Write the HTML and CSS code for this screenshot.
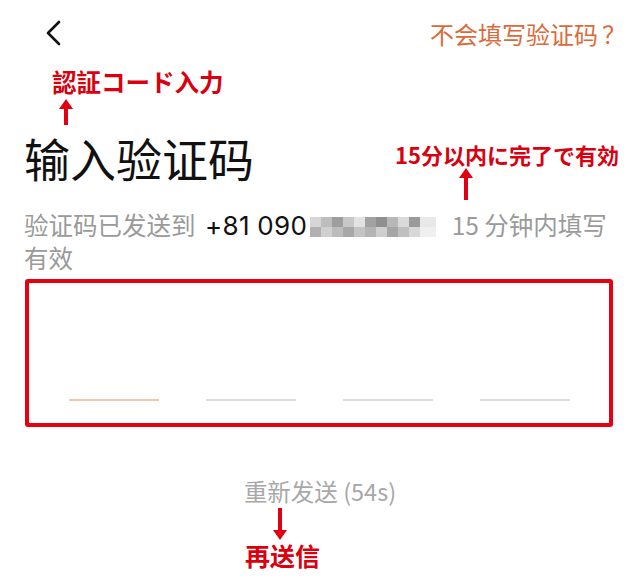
FILE: index.html
```html
<!DOCTYPE html>
<html lang="zh-CN">
<head>
    <meta charset="UTF-8">
    <meta name="viewport" content="width=device-width, initial-scale=1.0">
    <title>输入验证码</title>
    <link rel="stylesheet" href="styles.css">
</head>
<body>
    <div class="screen">
        <div class="topbar">
            <a class="back" href="#">
                <svg width="18" height="26" viewBox="0 0 18 26">
                    <path d="M15 2 L4 13 L15 24" fill="none" stroke="#111" stroke-width="2.6" stroke-linecap="round" stroke-linejoin="round"/>
                </svg>
            </a>
            <a class="help" href="#">不会填写验证码<span class="qmark">？</span></a>
        </div>

        <h1 class="title">输入验证码</h1>

        <p class="hint">验证码已发送到 <span class="phone">+81 090</span><span class="mask"><svg width="126" height="20" viewBox="0 0 126 20">
            <rect x="0" y="0" width="11" height="10" fill="#d6d6d6"/><rect x="11" y="0" width="11" height="10" fill="#bdbdbd"/><rect x="22" y="0" width="11" height="10" fill="#9e9e9e"/><rect x="33" y="0" width="11" height="10" fill="#c8c8c8"/><rect x="44" y="0" width="11" height="10" fill="#e2e2e2"/><rect x="55" y="0" width="11" height="10" fill="#a2a2a2"/><rect x="66" y="0" width="11" height="10" fill="#8f8f8f"/><rect x="77" y="0" width="11" height="10" fill="#b8b8b8"/><rect x="88" y="0" width="11" height="10" fill="#dadada"/><rect x="99" y="0" width="11" height="10" fill="#9a9a9a"/><rect x="110" y="0" width="16" height="10" fill="#e8e8e8"/>
            <rect x="0" y="10" width="11" height="10" fill="#b0b0b0"/><rect x="11" y="10" width="11" height="10" fill="#d0d0d0"/><rect x="22" y="10" width="11" height="10" fill="#bcbcbc"/><rect x="33" y="10" width="11" height="10" fill="#a8a8a8"/><rect x="44" y="10" width="11" height="10" fill="#c4c4c4"/><rect x="55" y="10" width="11" height="10" fill="#b4b4b4"/><rect x="66" y="10" width="11" height="10" fill="#cfcfcf"/><rect x="77" y="10" width="11" height="10" fill="#a6a6a6"/><rect x="88" y="10" width="11" height="10" fill="#c0c0c0"/><rect x="99" y="10" width="11" height="10" fill="#d8d8d8"/><rect x="110" y="10" width="16" height="10" fill="#f0f0f0"/>
        </svg></span> 15 分钟内填写<br>有效</p>

        <div class="code-box">
            <div class="code-row">
                <span class="slot active"></span>
                <span class="slot"></span>
                <span class="slot"></span>
                <span class="slot"></span>
            </div>
        </div>

        <div class="resend">重新发送 (54s)</div>

        <!-- annotations -->
        <div class="note note-input">認証コード入力</div>
        <svg class="arrow arrow-input" width="14" height="26" viewBox="0 0 14 26">
            <polygon points="7,0 14,10 9,10 9,26 5,26 5,10 0,10" fill="#e00012"/>
        </svg>

        <div class="note note-valid">15分以内に完了で有効</div>
        <svg class="arrow arrow-valid" width="14" height="32" viewBox="0 0 14 32">
            <polygon points="7,0 14,10 9,10 9,32 5,32 5,10 0,10" fill="#e00012"/>
        </svg>

        <svg class="arrow arrow-resend" width="14" height="32" viewBox="0 0 14 32">
            <polygon points="7,32 14,22 9,22 9,0 5,0 5,22 0,22" fill="#e00012"/>
        </svg>
        <div class="note note-resend">再送信</div>
    </div>
</body>
</html>
```

FILE: styles.css
```css
body {
    margin: 0;
    padding: 0;
    background-color: #fff;
    font-family: 'Noto Sans CJK SC', 'Noto Sans', sans-serif;
    color: #111;
}

.screen {
    position: relative;
    width: 640px;
    height: 586px;
    overflow: hidden;
}

.topbar {
    display: flex;
    justify-content: space-between;
    align-items: center;
    height: 30px;
    padding: 18px 14px 0 44px;
}

.back {
    display: flex;
}

.help {
    color: #db6a3b;
    text-decoration: none;
    font-size: 24px;
}

.qmark {
    margin-left: 4px;
}

.title {
    margin: 82px 0 0 24px;
    font-size: 46px;
    font-weight: normal;
    line-height: 54px;
    color: #111;
}

.hint {
    width: 594px;
    margin: 24px 0 0 24px;
    font-size: 24.5px;
    line-height: 33px;
    color: #9a9a9a;
}

.phone {
    margin-left: 4px;
    font-family: 'Inter', 'Liberation Sans', sans-serif;
    font-size: 26px;
    line-height: 26px;
    letter-spacing: 0.3px;
    color: #111;
}

.mask {
    display: inline-block;
    vertical-align: -2px;
    margin: 0 10px 0 3px;
}

.mask svg {
    display: block;
}

.code-box {
    margin: 5px 0 0 25px;
    width: 580px;
    height: 140px;
    border: 4px solid #e60012;
    border-radius: 3px;
}

.code-row {
    display: flex;
    justify-content: center;
    gap: 47px;
    padding-top: 116px;
}

.slot {
    display: block;
    width: 90px;
    height: 2px;
    background-color: #dcdcdc;
}

.slot.active {
    background-color: #f2c6ab;
}

.resend {
    margin-top: 49px;
    text-align: center;
    font-size: 23.5px;
    line-height: 30px;
    color: #a8a8a8;
}

.note {
    position: absolute;
    font-family: 'Noto Sans CJK JP', 'Noto Sans', sans-serif;
    font-weight: bold;
    color: #d9000f;
    white-space: nowrap;
}

.note-input {
    left: 52px;
    top: 67px;
    font-size: 24.5px;
    line-height: 30px;
}

.note-valid {
    left: 395px;
    top: 141px;
    font-size: 22px;
    line-height: 26px;
}

.note-resend {
    left: 245px;
    top: 540px;
    font-size: 25px;
    line-height: 30px;
}

.arrow {
    position: absolute;
}

.arrow-input {
    left: 59px;
    top: 99px;
}

.arrow-valid {
    left: 459px;
    top: 168px;
}

.arrow-resend {
    left: 273px;
    top: 508px;
}
```
